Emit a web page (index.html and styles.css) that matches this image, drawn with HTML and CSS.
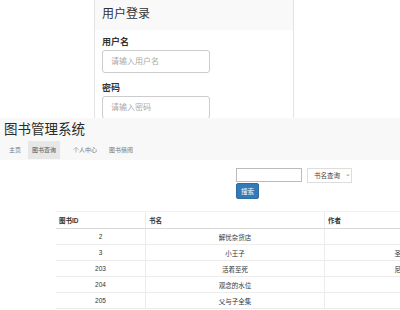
FILE: index.html
```html
<!DOCTYPE html>
<html lang="zh">
<head>
<meta charset="utf-8">
<title>图书管理系统</title>
<link rel="stylesheet" href="styles.css">
</head>
<body>
<section class="login-shot">
  <div class="panel">
    <div class="panel-heading">用户登录</div>
    <div class="panel-body">
      <label class="field-label">用户名</label>
      <input class="field-input" type="text" placeholder="请输入用户名">
      <label class="field-label">密码</label>
      <input class="field-input" type="password" placeholder="请输入密码">
    </div>
  </div>
</section>
<section class="app-shot">
  <header class="app-header">
    <h1 class="app-title">图书管理系统</h1>
    <nav class="app-nav">
      <a class="nav-item">主页</a>
      <a class="nav-item active">图书查询</a>
      <a class="nav-item">个人中心</a>
      <a class="nav-item">图书借阅</a>
    </nav>
  </header>
  <div class="search">
    <div class="search-row">
      <input class="search-input" type="text">
      <div class="search-select">书名查询<span class="chev">⌄</span></div>
    </div>
    <button class="search-btn">搜索</button>
  </div>
  <table class="books">
    <thead>
      <tr><th class="c1">图书ID</th><th class="c2">书名</th><th class="c3">作者</th></tr>
    </thead>
    <tbody>
      <tr><td>2</td><td>解忧杂货店</td><td></td></tr>
      <tr><td>3</td><td>小王子</td><td>圣</td></tr>
      <tr><td>203</td><td>活着至死</td><td>尼</td></tr>
      <tr><td>204</td><td>观念的水位</td><td></td></tr>
      <tr><td>205</td><td>父与子全集</td><td></td></tr>
    </tbody>
  </table>
</section>
</body>
</html>
```
FILE: styles.css
```css
html, body {
  margin: 0;
  padding: 0;
  background: #fff;
  font-family: "Liberation Sans", "Noto Sans CJK SC", sans-serif;
  color: #333;
  width: 400px;
  height: 310px;
  overflow: hidden;
}

.login-shot {
  height: 118px;
  overflow: hidden;
  background: #fff;
}

.panel {
  margin-left: 94px;
  width: 200px;
  height: 130px;
  border-left: 1px solid #e3e3e3;
  border-right: 1px solid #e3e3e3;
  box-sizing: border-box;
}

.panel-heading {
  height: 30px;
  box-sizing: border-box;
  padding: 7px 0 0 7px;
  font-size: 12px;
  line-height: 15px;
  background: #f9f9f9;
  color: #333;
}

.panel-body {
  padding: 0 7px;
  display: flex;
  flex-direction: column;
  align-items: flex-start;
}

.field-label {
  font-size: 9px;
  font-weight: bold;
  line-height: 12px;
  margin-top: 6px;
  margin-bottom: 2px;
  color: #333;
}

.field-input {
  width: 108px;
  height: 23px;
  box-sizing: border-box;
  border: 1px solid #ccc;
  border-radius: 3px;
  padding: 0 8px;
  font-family: inherit;
  font-size: 8px;
  color: #555;
  margin: 0 0 3px 0;
}
.field-input::placeholder {
  color: #aaa;
}

.app-shot {
  background: #fff;
}

.app-header {
  background: #f8f8f8;
  height: 42px;
  box-sizing: border-box;
  padding-top: 3px;
}

.app-title {
  margin: 0 0 0 4px;
  font-size: 13.5px;
  font-weight: normal;
  line-height: 18px;
  color: #2a2a2a;
}

.app-nav {
  display: flex;
  margin-top: 2px;
  padding-left: 4px;
}

.nav-item {
  font-size: 6px;
  line-height: 18px;
  padding: 0 5px;
  margin-right: 2px;
  color: #777;
}
.nav-item.active {
  background: #e7e7e7;
  color: #555;
  padding: 0 4px;
  margin-right: 8px;
}

.search {
  margin-left: 236px;
  padding-top: 8px;
  height: 51px;
  box-sizing: border-box;
}

.search-row {
  display: flex;
  align-items: flex-start;
  gap: 5px;
}

.search-input {
  width: 66px;
  height: 14px;
  box-sizing: border-box;
  border: 1px solid #bbb;
  margin: 0;
  padding: 0;
}

.search-select {
  width: 45px;
  height: 15px;
  box-sizing: border-box;
  border: 1px solid #ddd;
  font-size: 6.5px;
  line-height: 13px;
  padding-left: 6px;
  color: #444;
  display: flex;
  gap: 5px;
}
.chev {
  color: #888;
  font-size: 7px;
  line-height: 10px;
}

.search-btn {
  display: block;
  margin: 0;
  width: 23px;
  height: 16px;
  border: 1px solid #2e6da4;
  border-radius: 2px;
  background: #337ab7;
  color: #fff;
  font-family: inherit;
  font-size: 6.5px;
  padding: 0;
}

.books {
  margin-left: 56px;
  width: 344px;
  border-collapse: collapse;
  font-size: 6.5px;
  color: #333;
  table-layout: fixed;
}

.books th, .books td {
  border: 1px solid #ececec;
  padding: 0 3px;
  height: 15px;
}
.books th {
  text-align: left;
  height: 16px;
  font-weight: bold;
  border-bottom: 1px solid #d8d8d8;
  border-top: 1px solid #f2f2f2;
}
.books td {
  text-align: center;
}
.books .c1 { width: 83px; }
.books .c2 { width: 172px; }
.books .c3 { width: 71px; }
.books td:nth-child(3) {
  text-align: right;
  padding-right: 1px;
}
.books tr > :first-child { border-left: none; }
.books tr > :last-child { border-right: none; }
```
